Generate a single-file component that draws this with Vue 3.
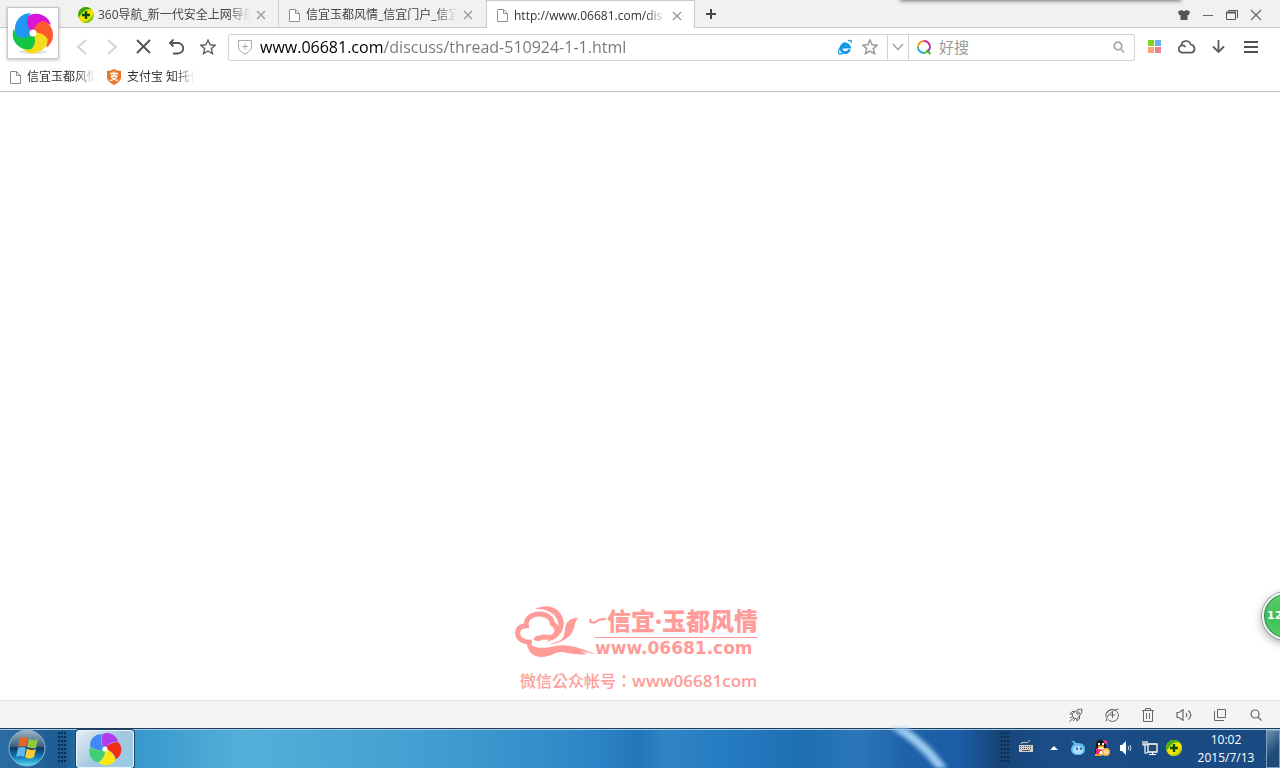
<script setup>
import { ref } from 'vue'

const tabs = [
  { title: '360导航_新一代安全上网导航', icon: 'plus', active: false },
  { title: '信宜玉都风情_信宜门户_信宜', icon: 'doc', active: false },
  { title: 'http://www.06681.com/dis', icon: 'doc', active: true },
]
const url = ref('www.06681.com/discuss/thread-510924-1-1.html')
const query = ref('')
const bigBlades = ['#d916d8', '#ff5a2c', '#f7dc1c', '#12c544', '#2196f3']
const smallBlades = ['#b13cf0', '#f22c17', '#ffe712', '#3fcf74', '#3f8af2']
</script>

<template>
  <div class="window">
    <header class="chrome">
      <button class="brand" aria-label="浏览器菜单">
        <svg width="46" height="46" viewBox="-23 -23 46 46">
          <ellipse cx="0" cy="19" rx="14" ry="2" fill="#e4e4e4" />
          <path v-for="(c, i) in bigBlades" :key="c" :fill="c" :transform="`rotate(${i * 72})`"
            d="M0 0C-6-3-9-8-8-14C-1-23 15-20 18-8C11-12 4-9 0 0Z" />
          <circle r="3.5" fill="#fff" />
        </svg>
      </button>
      <span class="edge-shadow"></span>

      <div class="tabstrip">
        <div v-for="t in tabs" :key="t.title" class="tab" :class="{ active: t.active }">
          <svg v-if="t.icon === 'plus'" class="ticon" width="16" height="16" viewBox="0 0 16 16">
            <circle cx="8" cy="8" r="8" fill="#f3e300" />
            <path d="M2 2.5A8 8 0 0 1 14 2.8C9 1 4 4 1 11A8 8 0 0 1 2 2.5Z" fill="#38a516" />
            <path d="M15.500 6A8 8 0 0 1 4 15C10 15 14 11 15.500 6Z" fill="#7cc81b" />
            <path d="M8 4V12M4 8H12" stroke="#064f0b" stroke-width="2.400" />
          </svg>
          <svg v-else class="ticon" width="11" height="13" viewBox="0 0 11 13" fill="#fff" stroke="#929292">
            <path d="M.5 .5H6.500L10.500 4.500V12.500H.5ZM6.500 .5V4.500H10.500" />
          </svg>
          <button class="ttitle fade">{{ t.title }}</button>
          <button class="tclose" aria-label="关闭标签">
            <svg width="10" height="10" viewBox="0 0 10 10" stroke="#999" stroke-width="1.300"><path d="M1 1L9 9M9 1L1 9" /></svg>
          </button>
        </div>
        <button class="newtab" aria-label="新标签">
          <svg width="12" height="12" viewBox="0 0 12 12" stroke="#444" stroke-width="2"><path d="M6 1V11M1 6H11" /></svg>
        </button>
        <div class="wincontrols">
          <button aria-label="皮肤">
            <svg width="12" height="10" viewBox="0 0 12 10" fill="#555"><path d="M0 1.500L3.500 0Q6 2 8.500 0L12 1.500L11 5H9.500V10H2.500V5H1Z" /></svg>
          </button>
          <button aria-label="最小化">
            <svg width="12" height="12" viewBox="0 0 12 12" stroke="#666"><path d="M1 6.500H11" /></svg>
          </button>
          <button aria-label="还原">
            <svg width="12" height="12" viewBox="0 0 12 12" stroke="#555" fill="none"><path d="M.5 3V10.500H9.500V3M2 1.500H11.500V9" /><path d="M0 3.500H10" stroke-width="2" /></svg>
          </button>
          <button aria-label="关闭">
            <svg width="12" height="12" viewBox="0 0 12 12" stroke="#666" stroke-width="1.200"><path d="M1 1L11 11M11 1L1 11" /></svg>
          </button>
        </div>
      </div>

      <div class="toolbar">
        <div class="history">
          <button aria-label="后退">
            <svg width="12" height="18" viewBox="0 0 12 18" fill="none" stroke="#d2d2d2" stroke-width="1.800"><path d="M10 2L2 9L10 16" /></svg>
          </button>
          <button aria-label="前进">
            <svg width="12" height="18" viewBox="0 0 12 18" fill="none" stroke="#d2d2d2" stroke-width="1.800"><path d="M2 2L10 9L2 16" /></svg>
          </button>
        </div>
        <button aria-label="停止">
          <svg width="16" height="16" viewBox="0 0 16 16" stroke="#505050" stroke-width="1.800"><path d="M1 1L14 14M14 1L1 14" /></svg>
        </button>
        <button aria-label="恢复">
          <svg width="16" height="18" viewBox="0 0 16 18" fill="none" stroke="#555" stroke-width="1.800"><path d="M5.500 1.500L2 5L5.500 8.500M2 5H10A5 5 0 0 1 10 15.500H5" /></svg>
        </button>
        <button aria-label="收藏">
          <svg width="16" height="16" viewBox="0 0 16 16" fill="none" stroke="#606060" stroke-width="1.400"><path d="M8 1L10.100 5.800L15.200 6.200L11.300 9.600L12.500 14.700L8 12L3.500 14.700L4.700 9.600L.8 6.200L5.900 5.800Z" /></svg>
        </button>

        <div class="omnibox">
          <label class="address">
            <svg width="14" height="16" viewBox="0 0 14 16" fill="none" stroke="#aaa"><path d="M.5 1.500H13.500V8Q13.500 12 7 15Q.5 12 .5 8ZM7 4.500V10.500M4 7.500H10" /></svg>
            <input v-model="url" class="url" aria-label="地址" />
          </label>
          <button aria-label="兼容模式" class="mode">
            <svg width="14" height="16" viewBox="0 0 14 16" fill="none">
              <path d="M11.500 10.500A4.300 4.300 0 1 1 11.500 8.200H4" stroke="#1296e6" stroke-width="2.800" />
              <path d="M1 15C-.5 13 2 6 7 3.500M10 1.500C13 1 14 2 13 4M1 15Q3 15.500 5 14" stroke="#1296e6" stroke-width="1.200" />
            </svg>
          </button>
          <button aria-label="加入收藏" class="mode">
            <svg width="16" height="16" viewBox="0 0 16 16" fill="none" stroke="#999" stroke-width="1.500"><path d="M8 1L10.100 5.800L15.200 6.200L11.300 9.600L12.500 14.700L8 12L3.500 14.700L4.700 9.600L.8 6.200L5.900 5.800Z" /></svg>
          </button>
          <button class="drop" aria-label="展开">
            <svg width="12" height="8" viewBox="0 0 12 8" fill="none" stroke="#aaa" stroke-width="1.800"><path d="M1 1L6 6.500L11 1" /></svg>
          </button>
          <label class="search">
            <svg width="16" height="16" viewBox="0 0 16 16" fill="none" stroke-width="1.800">
              <path d="M2 8A6 6 0 0 1 8 2" stroke="#f79a1c" /><path d="M8 2A6 6 0 0 1 14 8" stroke="#d5219b" />
              <path d="M14 8A6 6 0 0 1 12 12" stroke="#8b35b5" /><path d="M8 14A6 6 0 0 1 2 8" stroke="#1bb3d8" />
              <path d="M12 12A6 6 0 0 1 8 14M10.500 11L14.500 15" stroke="#43ad2b" />
            </svg>
            <input v-model="query" placeholder="好搜" aria-label="搜索" />
          </label>
          <button class="go" aria-label="开始搜索">
            <svg width="12" height="12" viewBox="0 0 12 12" fill="none" stroke="#aaa" stroke-width="1.800"><circle cx="5" cy="5" r="3.800" /><path d="M8 8L11 11.500" /></svg>
          </button>
        </div>

        <div class="tools">
          <button aria-label="应用">
            <svg width="14" height="14" viewBox="0 0 14 14"><path d="M0 0H6V6H0Z" fill="#7ed321" /><path d="M7 0H13V6H7Z" fill="#65b1ec" /><path d="M0 7H6V13H0Z" fill="#fda576" /><path d="M7 7H13V13H7Z" fill="#ec808c" /></svg>
          </button>
          <button aria-label="云">
            <svg width="18" height="14" viewBox="0 0 18 14" fill="none" stroke="#5a5a5a" stroke-width="1.700"><path d="M4.500 12.700A3.700 3.700 0 0 1 3.300 5.500A4.800 4.800 0 0 1 12.700 4.500A4.200 4.200 0 0 1 13.500 12.700ZM3.500 5.500Q6 5 7.500 7" /></svg>
          </button>
          <button aria-label="下载">
            <svg width="14" height="14" viewBox="0 0 14 14" fill="none" stroke="#5a5a5a" stroke-width="1.800"><path d="M6.500 0V12M1 6.500L6.500 12L12 6.500" /></svg>
          </button>
          <button aria-label="菜单">
            <svg width="14" height="14" viewBox="0 0 14 14" stroke="#505050" stroke-width="2"><path d="M0 2H14M0 7H14M0 12H14" /></svg>
          </button>
        </div>
      </div>

      <nav class="bookmarks">
        <a href="#">
          <svg width="11" height="13" viewBox="0 0 11 13" fill="#fff" stroke="#8a8a8a"><path d="M.5 .5H6.500L10.500 4.500V12.500H.5ZM6.500 .5V4.500H10.500" /></svg>
          <span class="fade">信宜玉都风情</span>
        </a>
        <a href="#">
          <svg width="14" height="16" viewBox="0 0 14 16">
            <path d="M0 2Q4 2 7 0Q10 2 14 2V9Q13 13 7 16Q1 13 0 9Z" fill="#e8762d" />
            <path d="M3 4.500H11M7 2.500V6.500M4 7H10Q8 11 3 11.500M4 7.500Q7 11 11 11.500" fill="none" stroke="#fff" stroke-width="1.300" />
          </svg>
          <span class="fade">支付宝 知托付</span>
        </a>
      </nav>
    </header>

    <main class="page">
      <div class="float-ball">12</div>
      <div class="watermark">
        <div class="mark-row">
          <svg class="cloud" width="80" height="53" viewBox="45 30 240 159" fill="#ff9b99">
            <path fill="none" stroke="#ff9b99" stroke-width="15" d="M96 142C70 142 53 132 53 114C53 98 66 92 79 92C76 70 96 56 120 57C143 58 156 71 158 87C176 97 174 120 157 126C143 130 135 122 120 129Q112 133 104 128" />
            <path d="M105 42C150 20 187 45 191 80C194 110 172 135 135 142C163 128 180 105 174 82C168 54 140 40 105 42Z" />
            <path d="M186 132C200 115 190 92 205 79C215 70 226 68 234 70C222 82 226 100 214 116C204 130 180 144 148 149C165 142 178 138 186 132Z" />
            <path d="M78 138C100 162 130 162 165 153C205 144 240 160 288 177C262 174 252 168 240 167L262 177C240 180 220 177 200 173C165 165 160 185 125 186C98 186 84 172 78 138Z" />
          </svg>
          <div class="mark-text">
            <div class="mark-title">
              <svg width="18" height="14" viewBox="0 0 18 14" fill="none" stroke="#ff9b99"><path d="M2 5Q0 8 3 8.500Q6 9 8 7Q10 5 17 5" stroke-width="2.200" /></svg>
              <strong>信宜·玉都风情</strong>
            </div>
            <div class="mark-url">www.06681.com</div>
          </div>
        </div>
        <div class="mark-caption">微信公众帐号：<span>www06681com</span></div>
      </div>
    </main>

    <div class="statusbar">
      <button aria-label="加速">
        <svg width="14" height="14" viewBox="0 0 14 14" fill="none" stroke="#666"><path d="M4 9L3 6L9 1.500L13 1L12.500 5L8 11L5 10ZM3 6H1L3 3.500H6M8 11V13L10.500 11V8M1 10L3.500 8.500M.5 13.500L5 9.500M4 13L6 11" /><circle cx="9" cy="5" r="1.300" /></svg>
      </button>
      <button aria-label="无痕">
        <svg width="14" height="14" viewBox="0 0 14 14" fill="none" stroke="#666"><path d="M3 11.500A6 6 0 1 0 2 5M1 13.500Q2 4 13.500 .8M5 7H10.500M7.500 4V10M1 9Q0 2 8 1.200" /></svg>
      </button>
      <button aria-label="清理">
        <svg width="14" height="14" viewBox="0 0 14 14" fill="none" stroke="#666"><path d="M1 2.500H13M4.500 2V.5H9.500V2M2.500 2.500V13.500H11.500V2.500M5.500 5V11M8.500 5V11" /></svg>
      </button>
      <button aria-label="声音">
        <svg width="16" height="12" viewBox="0 0 16 12" fill="none" stroke="#666" stroke-width="1.200"><path d="M1 3.500H3L7 .8V11.200L3 8.500H1ZM10 4Q11.500 6 10 8M12.500 1.500Q17 6 12.500 10.500" /></svg>
      </button>
      <button aria-label="窗口">
        <svg width="14" height="14" viewBox="0 0 14 14" fill="none" stroke="#666"><path d="M4.500 1.500H12.500V9.500H4.500ZM1.500 3V12.500H11" /></svg>
      </button>
      <button aria-label="缩放">
        <svg width="12" height="12" viewBox="0 0 12 12" fill="none" stroke="#666" stroke-width="1.200"><circle cx="5" cy="5" r="4" /><path d="M8 8L11.500 11.500" /></svg>
      </button>
    </div>

    <footer class="taskbar">
      <svg class="streak" width="100" height="40" viewBox="0 0 100 40" fill="none">
        <path d="M12-4Q44 14 66 46" stroke="#9ccaf2" stroke-width="9" />
      </svg>
      <button class="start" aria-label="开始">
        <svg width="38" height="38" viewBox="0 0 38 38">
          <defs>
            <linearGradient id="orb" x2="0" y2="1"><stop stop-color="#9fb7c7" /><stop offset=".45" stop-color="#3b637f" /><stop offset=".5" stop-color="#0c3a63" /><stop offset=".75" stop-color="#0f7ab8" /><stop offset="1" stop-color="#58e0f8" /></linearGradient>
          </defs>
          <circle cx="19" cy="19" r="18" fill="url(#orb)" stroke="#8fb5cf" />
          <path d="M12 9Q16 7 20 9L18 18Q14 16 10 18Z" fill="#e9622b" />
          <path d="M21 10Q25 12 30 10L28 19Q24 20 19 18Z" fill="#93c83e" />
          <path d="M10 19Q14 17 18 19L16 28Q12 26 8 28Z" fill="#5db7ea" />
          <path d="M19 19.500Q23 22 28 20L26 28Q22 31 17 28Z" fill="#fcc937" />
        </svg>
      </button>
      <span class="grip"></span>
      <button class="app" aria-label="浏览器">
        <svg width="34" height="34" viewBox="-17 -17 34 34">
          <path v-for="(c, i) in smallBlades" :key="c" :fill="c" :transform="`rotate(${i * 72})`"
            d="M0 0C-4-4-4-12-2-15C5-18 12-13 13-7C8-8 3-5 0 0Z" />
          <circle r="2.600" fill="#fff" />
        </svg>
      </button>

      <div class="tray">
        <span class="grip"></span>
        <button aria-label="输入法" class="kbd">
          <svg width="16" height="18" viewBox="0 0 16 18" fill="none"><path d="M3 5Q3 3 6 3.500Q10 5 12 1" stroke="#c8c8c8" /><path d="M1 6H15V13H1Z" fill="#d2d2ce" /><path d="M2 7.500H14M2 9.500H14" stroke="#555" stroke-dasharray="1 1" /><path d="M4 11.500H12" stroke="#555" /></svg>
        </button>
        <button aria-label="显示隐藏的图标" class="more">
          <svg width="8" height="4" viewBox="0 0 8 4" fill="#fff"><path d="M4 0L8 4H0Z" /></svg>
        </button>
        <button aria-label="旺旺">
          <svg width="16" height="16" viewBox="0 0 16 16"><path d="M1 1Q4 0 6 3Q15 2 15 9Q15 15 8 15Q1 15 1 9Q1 6 4 4Q3 2 1 1Z" fill="#66bdf3" /><ellipse cx="8" cy="10" rx="5" ry="4" fill="#b2e2ff" /><path d="M7 7.500V10M11 7.500V10" stroke="#123c6c" stroke-width="1.400" /></svg>
        </button>
        <button aria-label="QQ">
          <svg width="16" height="18" viewBox="0 0 16 18"><path d="M2 8Q1 1 7 1Q12 1 12 8L13 13Q12 16 7 16Q1 16 1 12Z" fill="#151515" /><ellipse cx="7" cy="12" rx="4" ry="4.500" fill="#fff" /><path d="M5 4V6M9 4V6" stroke="#fff" stroke-width="2" /><path d="M4 7.500H10" stroke="#f9a91a" stroke-width="2" /><path d="M2 9Q7 12 12 9L11 12H6L5 15H2Z" fill="#e9256b" /><path d="M9 1L13 2L14 6L10 4Z" fill="#ef3ca3" /><path d="M1 16H8" stroke="#ef9d18" stroke-width="2" /><circle cx="12" cy="13" r="4" fill="#f6b545" /><path d="M10 12H14M10 14H14" stroke="#fff" /></svg>
        </button>
        <button aria-label="音量">
          <svg width="14" height="16" viewBox="0 0 14 16" fill="none"><path d="M1 5H3L7 1V15L3 11H1Z" fill="#fff" /><path d="M9 6Q10.500 8 9 10M11 5Q13 8 11 11" stroke="#c5d5e5" /></svg>
        </button>
        <button aria-label="网络">
          <svg width="16" height="16" viewBox="0 0 16 16" fill="none" stroke="#fff"><path d="M6 4H15V12H6Z" fill="#234b73" stroke-width="1.300" /><path d="M7 14.500H14M10.500 12V14M1 1V5H5V1M3 1V13H6" stroke-width="1.200" /></svg>
        </button>
        <button aria-label="安全卫士">
          <svg width="16" height="16" viewBox="0 0 16 16"><circle cx="8" cy="8" r="8" fill="#f3e300" /><path d="M2 2.500A8 8 0 0 1 14 2.800C9 1 4 4 1 11A8 8 0 0 1 2 2.500Z" fill="#43b31c" /><path d="M15.500 6A8 8 0 0 1 4 15C10 15 14 11 15.500 6Z" fill="#b5cf14" /><path d="M8 4V12M4 8H12" stroke="#064f0b" stroke-width="2.400" /></svg>
        </button>
        <div class="clock"><span>10:02</span><span>2015/7/13</span></div>
        <button class="desktop" aria-label="显示桌面"></button>
      </div>
    </footer>
  </div>
</template>

<style>
body { margin: 0; }
</style>

<style scoped>
.window {
  display: flex;
  flex-direction: column;
  height: 100vh;
  overflow: hidden;
  background: #fff;
  font: 12px/16px "Open Sans", "Noto Sans CJK SC", sans-serif;
  color: #444;
}
button {
  display: inline-flex;
  align-items: center;
  justify-content: center;
  flex: none;
  padding: 0;
  border: 0;
  background: none;
  font: inherit;
  color: inherit;
}
input {
  flex: 1;
  min-width: 0;
  padding: 0;
  border: 0;
  outline: 0;
  background: none;
  font: inherit;
}
svg { display: block; flex: none; }
.chrome { position: relative; border-bottom: 1px solid #c4c4c4; }
.brand {
  position: absolute;
  left: 7px;
  top: 7px;
  width: 52px;
  height: 52px;
  box-sizing: border-box;
  border: 1px solid #c6c6c6;
  background: #fff;
  box-shadow: 0 1px 3px rgba(0, 0, 0, 0.25);
}
.edge-shadow {
  position: absolute;
  right: 100px;
  top: -6px;
  width: 279px;
  height: 6px;
  box-shadow: 0 0 4px 1px rgba(0, 0, 0, 0.55);
}
.tabstrip {
  display: flex;
  height: 28px;
  padding-left: 71px;
  background: #f1f1f1;
  box-shadow: inset 0 -1px #c9c9c9;
}
.tab {
  display: flex;
  align-items: center;
  width: 208px;
  box-sizing: border-box;
  padding: 2px 12px 0 7px;
  border-right: 1px solid #cfcfcf;
}
.tab:nth-child(2) { width: 207px; border-right-color: transparent; padding-left: 10px; }
.tab.active {
  width: 209px;
  padding-left: 10px;
  border: solid #c9c9c9;
  border-width: 1px 1px 0;
  background: #fff;
  color: #333;
}
.ttitle {
  flex: 1;
  min-width: 0;
  justify-content: flex-start;
  margin: 0 6px 0 4px;
  overflow: hidden;
  white-space: nowrap;
}
.tab:nth-child(n + 2) .ttitle { margin-left: 6px; }
.fade {
  -webkit-mask-image: linear-gradient(to left, transparent, #000 20px);
  mask-image: linear-gradient(to left, transparent, #000 20px);
}
.newtab { width: 32px; }
.wincontrols { display: flex; margin-left: auto; padding: 2px 12px 0 0; }
.wincontrols button { width: 24px; }
.toolbar {
  display: flex;
  align-items: center;
  gap: 2px;
  height: 38px;
  padding: 0 13px 0 67px;
}
.toolbar button { width: 30px; height: 26px; }
.history { display: flex; }
.omnibox {
  display: flex;
  flex: 1;
  height: 27px;
  box-sizing: border-box;
  margin: 0 2px 0 3px;
  border: 1px solid #d4d4d4;
  border-radius: 2px;
}
.address { display: flex; align-items: center; gap: 8px; flex: 1; padding-left: 9px; }
.url {
  height: 24px;
  font-size: 16px;
  color: transparent;
  caret-color: #000;
  background: linear-gradient(90deg, #000 124px, #777 124px);
  -webkit-background-clip: text;
  background-clip: text;
}
.omnibox .mode { width: 25px; height: auto; }
.omnibox .drop { width: 22px; height: auto; margin-left: 5px; border: solid #d4d4d4; border-width: 0 1px; }
.search { display: flex; align-items: center; gap: 7px; width: 192px; padding-left: 7px; font-size: 15px; }
.search input { height: 24px; }
.search input::placeholder { color: #999; opacity: 1; }
.omnibox .go { width: 22px; height: auto; margin-right: 4px; }
.tools { display: flex; }
.tools button { width: 32px; }
.bookmarks { display: flex; gap: 12px; height: 22px; padding: 0 0 3px 10px; }
.bookmarks a {
  display: flex;
  align-items: center;
  gap: 6px;
  color: #333;
  text-decoration: none;
}
.bookmarks .fade { width: 68px; overflow: hidden; white-space: nowrap; }
.page {
  position: relative;
  display: flex;
  flex: 1;
  align-items: flex-end;
  justify-content: center;
  min-height: 0;
  padding: 0 7px 8px 0;
  overflow: hidden;
}
.float-ball {
  position: absolute;
  right: -30px;
  bottom: 60px;
  width: 48px;
  height: 48px;
  box-sizing: border-box;
  padding-left: 3px;
  border: 2px solid #eef2ee;
  border-radius: 50%;
  background: linear-gradient(#62cf70, #40bd58 50%, #54d163);
  box-shadow: inset 0 0 0 1px #27864d, 0 0 0 1px #9a9a9a, 0 3px 8px 1px rgba(0, 0, 0, 0.3);
  font: bold 11px/44px "DejaVu Sans", sans-serif;
  color: #fff;
}
.watermark { color: #ff9b99; }
.mark-row { display: flex; }
.mark-text { width: 163px; }
.mark-title {
  display: flex;
  align-items: center;
  justify-content: flex-end;
  height: 32px;
  border-bottom: 1px solid #ff9b99;
  font-size: 24px;
  white-space: nowrap;
}
.mark-title svg { margin-left: -8px; }
.mark-title strong { font-weight: 900; }
.mark-url { font: bold 17px/20px "DejaVu Sans", sans-serif; }
.mark-caption {
  margin-top: 11px;
  padding-left: 5px;
  font: 500 16px/22px "Noto Sans CJK TC", sans-serif;
  white-space: nowrap;
}
.mark-caption span { font-family: "Open Sans", sans-serif; font-size: 17px; font-weight: 600; }
.statusbar {
  display: flex;
  justify-content: flex-end;
  height: 27px;
  padding-right: 6px;
  border-top: 1px solid #e2e2e2;
  background: #f4f4f4;
}
.statusbar button { width: 36px; }
.taskbar {
  position: relative;
  display: flex;
  align-items: center;
  height: 40px;
  box-sizing: border-box;
  padding-left: 8px;
  background: linear-gradient(90deg, #2a6da3 0, #1c5b91 5%, #2c80b4 7%, #3999cd 11%, #54afd9 19%, #439fd2 33%, #348fca 42%, #2c82c6 47%, #2277ba 50%, #3085c6 52%, #257bc2 57%, #1f6eb2 63%, #2c76bc 67%, #1e62a8 71%, #1b5da6 75%, #164478 78%, #1a4d87 82%, #194a80 100%);
  box-shadow: inset 0 1px #1d3c5c, inset 0 2px #a4cce6;
  color: #fff;
}
.streak { position: absolute; left: 68.75%; top: 0; filter: blur(2px); }
.start { width: 38px; }
.grip {
  width: 9px;
  height: 32px;
  margin-left: 12px;
  background: radial-gradient(circle at 1px 1px, #0c2c4c 1px, transparent 1px) 0 0 / 3px 4px;
}
.app {
  width: 58px;
  height: 38px;
  margin: 1px 0 0 9px;
  box-sizing: border-box;
  border: 1px solid #eaf6fc;
  border-radius: 3px;
  background: linear-gradient(135deg, #e6eff5, #a3c8df 50%, #98cce6);
  box-shadow: 0 0 0 1px #1b4568;
}
.tray { position: relative; display: flex; align-items: center; height: 40px; margin-left: auto; }
.tray button { width: 24px; }
.tray .kbd { width: 32px; }
.tray .more { width: 24px; }
.clock {
  display: flex;
  flex-direction: column;
  align-items: center;
  width: 80px;
  padding-top: 1px;
  font-size: 12px;
  line-height: 18px;
}
.tray .desktop {
  width: 14px;
  height: 38px;
  margin-top: 2px;
  border: 1px solid #7fa0bf;
  background: linear-gradient(135deg, #6f8eac, #1d4a78 60%);
}
</style>
